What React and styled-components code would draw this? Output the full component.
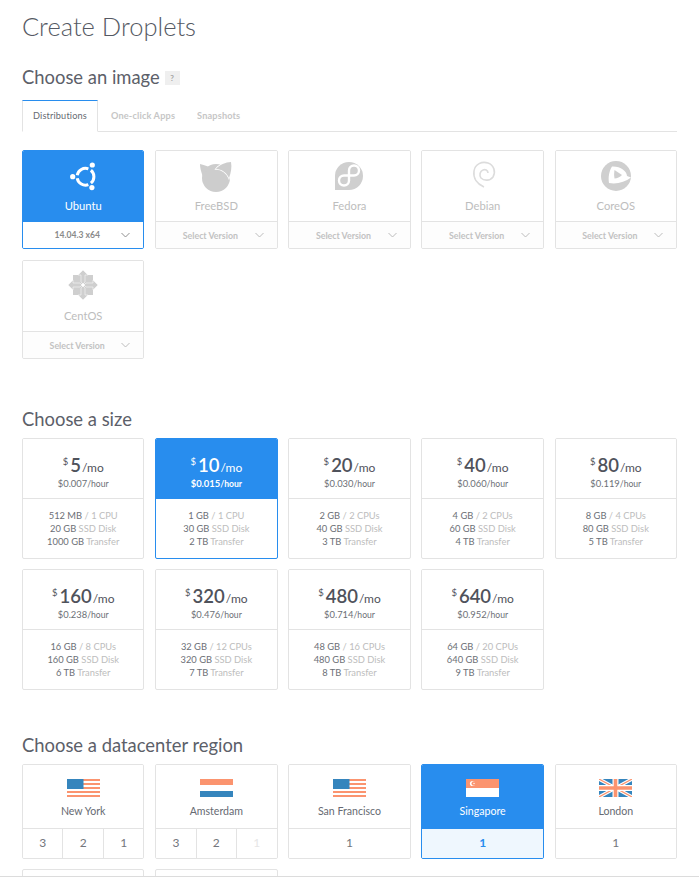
import React from 'react'
import styled, { createGlobalStyle } from 'styled-components'

const BLUE = '#288dee'
const LINE = '#e3e3e3'
const SALMON = '#fb946f'
const FLAG_BLUE = '#3585bd'

const Global = createGlobalStyle`
  html, body {
    margin: 0;
    height: 877px;
    overflow: hidden;
    background: #ffffff;
  }
  body {
    font-family: "Lato", "Liberation Sans", sans-serif;
    color: #5a5d66;
  }
`

const Page = styled.div`
  padding: 0 22px;
`
const Title = styled.h1`
  margin: 0;
  padding-top: 11px;
  font-size: 25.5px;
  line-height: 30px;
  font-weight: 300;
  color: #555963;
`
const Heading = styled.h2`
  display: flex;
  align-items: center;
  gap: 5px;
  margin: ${({ $top }) => $top}px 0 0;
  font-size: 18.4px;
  line-height: 22px;
  font-weight: 400;
  color: #5c6069;
`
const Help = styled.span`
  width: 15px;
  height: 14px;
  margin-top: 2px;
  background: #efefef;
  color: #a5a5a5;
  font-size: 8px;
  font-weight: 700;
  line-height: 14px;
  text-align: center;
`
const Tabs = styled.div`
  display: flex;
  height: 32px;
  margin-top: 12px;
  border-bottom: 1px solid ${LINE};
  box-sizing: border-box;
`
const Tab = styled.div`
  box-sizing: border-box;
  height: 32px;
  padding: 0 10px;
  margin-right: ${({ $active }) => ($active ? 2 : 0)}px;
  border: 1px solid ${({ $active }) => ($active ? LINE : 'transparent')};
  border-top-color: ${({ $active }) => ($active ? BLUE : 'transparent')};
  border-bottom-color: ${({ $active }) => ($active ? '#ffffff' : 'transparent')};
  font-size: 9.2px;
  line-height: 29px;
  font-weight: ${({ $active }) => ($active ? 400 : 700)};
  letter-spacing: 0.15px;
  color: ${({ $active }) => ($active ? '#666a72' : '#c6c6c6')};
`
const Grid = styled.div`
  display: grid;
  grid-template-columns: repeat(5, 1fr);
  column-gap: 10.75px;
  row-gap: ${({ $rowGap }) => $rowGap}px;
  margin-top: ${({ $top }) => $top}px;
`
const Card = styled.div`
  box-sizing: border-box;
  height: ${({ $height }) => $height}px;
  display: flex;
  flex-direction: column;
  border: 1px solid ${({ $active }) => ($active ? BLUE : LINE)};
  border-radius: 2px;
  overflow: hidden;
`
const ImageTop = styled.div`
  height: 70px;
  display: flex;
  flex-direction: column;
  align-items: center;
  padding-top: 7px;
  box-sizing: border-box;
  background: ${({ $active }) => ($active ? BLUE : '#ffffff')};
`
const ImageName = styled.div`
  margin-top: 3px;
  font-size: 11.2px;
  line-height: 18px;
  color: ${({ $active }) => ($active ? '#ffffff' : '#bdbdbd')};
`
const Version = styled.div`
  flex: 1;
  display: flex;
  align-items: center;
  justify-content: center;
  padding-right: 12px;
  position: relative;
  font-size: ${({ $active }) => ($active ? 8.6 : 8.8)}px;
  font-weight: 700;
  color: ${({ $active }) => ($active ? '#8a8a8a' : '#c2c2c2')};
  border-top: 1px solid ${({ $active }) => ($active ? BLUE : LINE)};
  background: ${({ $active }) => ($active ? '#ffffff' : '#fdfdfd')};
`
const Chevron = styled.svg`
  position: absolute;
  right: 13px;
  top: 10px;
  width: 9px;
  height: 6px;
  fill: none;
  stroke: ${({ $active }) => ($active ? '#8f8f8f' : '#bcbcbc')};
  stroke-width: 1;
`
const PriceTop = styled.div`
  height: 60px;
  box-sizing: border-box;
  padding-top: 14px;
  text-align: center;
  color: ${({ $active }) => ($active ? '#ffffff' : '#4f525b')};
  background: ${({ $active }) => ($active ? BLUE : '#ffffff')};
  border-bottom: 1px solid ${({ $active }) => ($active ? BLUE : LINE)};
`
const Monthly = styled.div`
  line-height: 24px;
  height: 24px;
  white-space: nowrap;
`
const Dollar = styled.sup`
  font-size: 9.5px;
  line-height: 0;
  vertical-align: 7px;
  margin-right: 2px;
`
const Amount = styled.span`
  font-size: 18.5px;
  font-weight: 600;
`
const PerMonth = styled.span`
  font-size: 12px;
  margin-left: 1px;
  font-weight: 400;
`
const Hourly = styled.div`
  font-size: 9.4px;
  line-height: 14px;
  font-weight: ${({ $active }) => ($active ? 700 : 400)};
  color: ${({ $active }) => ($active ? '#ffffff' : '#6c6f76')};
`
const HourUnit = styled.span`
  font-size: 8.6px;
`
const Specs = styled.div`
  flex: 1;
  padding-top: 10px;
  text-align: center;
  font-size: 9.35px;
  line-height: 13px;
  color: #6c6f76;
`
const SpecLight = styled.span`
  color: #bdbdbd;
`
const RegionTop = styled.div`
  height: 63px;
  box-sizing: border-box;
  padding-top: 14px;
  display: flex;
  flex-direction: column;
  align-items: center;
  background: ${({ $active }) => ($active ? BLUE : '#ffffff')};
`
const RegionName = styled.div`
  margin-top: 6px;
  font-size: 10.6px;
  line-height: 16px;
  color: ${({ $active }) => ($active ? '#ffffff' : '#666a72')};
`
const Datacenters = styled.div`
  flex: 1;
  display: flex;
  border-top: 1px solid ${({ $active }) => ($active ? BLUE : LINE)};
  background: ${({ $active }) => ($active ? '#eff7fe' : '#ffffff')};
`
const Datacenter = styled.div`
  flex: 1;
  text-align: center;
  font-size: 12px;
  line-height: 28px;
  font-weight: ${({ $active }) => ($active ? 700 : 400)};
  color: ${({ $active, $off }) => ($active ? BLUE : $off ? '#e6e6e6' : '#73767c')};
  & + & {
    border-left: 1px solid ${LINE};
  }
`
const FooterLine = styled.div`
  position: fixed;
  left: 0;
  right: 0;
  bottom: 0;
  height: 1px;
  background: #dcdcdc;
`

const Ubuntu = () => (
  <svg width='36' height='36' viewBox='0 0 36 36'>
    <path d='M23.37 26.59 A8.4 8.4 0 0 1 12.23 20.16 M12.23 17.24 A8.4 8.4 0 0 1 23.37 10.81 M25.9 12.27 A8.4 8.4 0 0 1 25.9 25.13' fill='none' stroke='#fff' strokeWidth='3' />
    <circle cx='7.7' cy='18.7' r='2.6' fill='#fff' />
    <circle cx='27.3' cy='7' r='2.6' fill='#fff' />
    <circle cx='26.9' cy='29.6' r='2.6' fill='#fff' />
  </svg>
)
const FreeBSD = () => (
  <svg width='36' height='36' viewBox='0 0 36 36'>
    <circle cx='18' cy='20' r='14' fill='#cdcdcd' />
    <path d='M2 6 C7 7 11 9 13 10.5 C9 12 6 15 5 18.5 C3 14 2 10 2 6 Z' fill='#cdcdcd' />
    <path d='M33 4 C28 4 21 7 18 11 C24 11 29 15 31 20 C33 15 34 9 33 4 Z' fill='#cdcdcd' stroke='#fff' strokeWidth='1.6' paintOrder='stroke' />
  </svg>
)
const Fedora = () => (
  <svg width='36' height='36' viewBox='0 0 36 36'>
    <path d='M18 4 a14 14 0 1 1 0 28 H4 V18 A14 14 0 0 1 18 4 Z' fill='#cfcfcf' />
    <path d='M18 23 V12.5 a5 5 0 1 1 5 5 H13 a5 5 0 1 0 5 5' fill='none' stroke='#fff' strokeWidth='2.4' />
  </svg>
)
const Debian = () => (
  <svg width='36' height='36' viewBox='0 0 36 36'>
    <path d='M19 29 C12 26 8 20 9 13 C10 6 17 3 23 5 C29 7 31 14 28 19 C25 23 19 23 16 20 C14 17 15 13 18 12 C20 11 23 12 23 15' fill='none' stroke='#dcdcdc' strokeWidth='1.6' />
  </svg>
)
const CoreOS = () => (
  <svg width='36' height='36' viewBox='0 0 36 36'>
    <circle cx='18' cy='18' r='15' fill='#cfcfcf' />
    <path d='M14 8.5 C11 13 10 20 11 25 C19 26.5 27 24 33 19.5 L29 18 C29 13 22 8 14 8.5 Z' fill='#fff' />
    <path d='M16.5 12 L24 17 C22 19 19 20.5 16.5 20.5 C16 18 16 15 16.5 12 Z' fill='#cfcfcf' />
  </svg>
)
const CentOS = () => (
  <svg width='36' height='36' viewBox='0 0 36 36' fill='#cfcfcf'>
    <g transform='translate(0 -1)'>
      <rect x='8' y='8' width='9' height='9' />
      <rect x='19' y='8' width='9' height='9' />
      <rect x='8' y='19' width='9' height='9' />
      <rect x='19' y='19' width='9' height='9' />
      {[0, 90, 180, 270].map(a => (
        <polygon key={a} points='18,3 23,8 20,8 20,15 18,17 16,15 16,8 13,8' transform={`rotate(${a} 18 18)`} stroke='#fff' strokeWidth='0.5' />
      ))}
    </g>
  </svg>
)

const USFlag = () => (
  <svg width='33' height='18' viewBox='0 0 33 18'>
    {[0, 4, 8, 12, 16].map(y => <rect key={y} y={y} width='33' height='2' fill={SALMON} />)}
    <rect width='16.5' height='10' fill={FLAG_BLUE} />
  </svg>
)
const NLFlag = () => (
  <svg width='33' height='18' viewBox='0 0 33 18'>
    <rect width='33' height='6' fill={SALMON} />
    <rect y='12' width='33' height='6' fill={FLAG_BLUE} />
  </svg>
)
const SGFlag = () => (
  <svg width='33' height='18' viewBox='0 0 33 18'>
    <rect width='33' height='9' fill={SALMON} />
    <rect y='9' width='33' height='9' fill='#fff' />
    <circle cx='6.5' cy='4.5' r='2.6' fill='#fff' />
    <circle cx='7.7' cy='4.5' r='2.2' fill={SALMON} />
    <circle cx='8' cy='4.5' r='0.7' fill='#fff' />
  </svg>
)
const UKFlag = () => (
  <svg width='33' height='18' viewBox='0 0 33 18'>
    <rect width='33' height='18' fill={FLAG_BLUE} />
    <path d='M0 0 L33 18 M33 0 L0 18' stroke='#fff' strokeWidth='3.4' />
    <path d='M0 0 L33 18 M33 0 L0 18' stroke={SALMON} strokeWidth='1.2' />
    <path d='M16.5 0 V18 M0 9 H33' stroke='#fff' strokeWidth='6' />
    <path d='M16.5 0 V18 M0 9 H33' stroke={SALMON} strokeWidth='3.6' />
  </svg>
)

const images = [
  { name: 'Ubuntu', Icon: Ubuntu, version: '14.04.3 x64', active: true },
  { name: 'FreeBSD', Icon: FreeBSD },
  { name: 'Fedora', Icon: Fedora },
  { name: 'Debian', Icon: Debian },
  { name: 'CoreOS', Icon: CoreOS },
  { name: 'CentOS', Icon: CentOS },
]

const sizes = [
  { price: 5, hour: '0.007', mem: '512 MB', cpu: '1 CPU', disk: 20, transfer: '1000 GB' },
  { price: 10, hour: '0.015', mem: '1 GB', cpu: '1 CPU', disk: 30, transfer: '2 TB', active: true },
  { price: 20, hour: '0.030', mem: '2 GB', cpu: '2 CPUs', disk: 40, transfer: '3 TB' },
  { price: 40, hour: '0.060', mem: '4 GB', cpu: '2 CPUs', disk: 60, transfer: '4 TB' },
  { price: 80, hour: '0.119', mem: '8 GB', cpu: '4 CPUs', disk: 80, transfer: '5 TB' },
  { price: 160, hour: '0.238', mem: '16 GB', cpu: '8 CPUs', disk: 160, transfer: '6 TB' },
  { price: 320, hour: '0.476', mem: '32 GB', cpu: '12 CPUs', disk: 320, transfer: '7 TB' },
  { price: 480, hour: '0.714', mem: '48 GB', cpu: '16 CPUs', disk: 480, transfer: '8 TB' },
  { price: 640, hour: '0.952', mem: '64 GB', cpu: '20 CPUs', disk: 640, transfer: '9 TB' },
]

const regions = [
  { name: 'New York', Flag: USFlag, centers: [3, 2, 1] },
  { name: 'Amsterdam', Flag: NLFlag, centers: [3, 2, 1], off: [1] },
  { name: 'San Francisco', Flag: USFlag, centers: [1] },
  { name: 'Singapore', Flag: SGFlag, centers: [1], active: true },
  { name: 'London', Flag: UKFlag, centers: [1] },
]

const App = () => (
  <Page>
    <Global />
    <Title>Create Droplets</Title>

    <Heading $top={25}>Choose an image <Help>?</Help></Heading>
    <Tabs>
      <Tab $active>Distributions</Tab>
      <Tab>One-click Apps</Tab>
      <Tab>Snapshots</Tab>
    </Tabs>
    <Grid $top={18} $rowGap={11}>
      {images.map(({ name, Icon, version, active }) => (
        <Card key={name} $height={99} $active={active}>
          <ImageTop $active={active}>
            <Icon />
            <ImageName $active={active}>{name}</ImageName>
          </ImageTop>
          <Version $active={active}>
            {version || 'Select Version'}
            <Chevron $active={active} viewBox='0 0 9 6'><polyline points='0.5,1 4.5,5 8.5,1' /></Chevron>
          </Version>
        </Card>
      ))}
    </Grid>

    <Heading $top={49}>Choose a size</Heading>
    <Grid $top={8} $rowGap={10}>
      {sizes.map(s => (
        <Card key={s.price} $height={121} $active={s.active}>
          <PriceTop $active={s.active}>
            <Monthly>
              <Dollar>$</Dollar>
              <Amount>{s.price}</Amount>
              <PerMonth>/mo</PerMonth>
            </Monthly>
            <Hourly $active={s.active}>${s.hour}<HourUnit>/hour</HourUnit></Hourly>
          </PriceTop>
          <Specs>
            <div>{s.mem} <SpecLight>/ {s.cpu}</SpecLight></div>
            <div>{s.disk} GB <SpecLight>SSD Disk</SpecLight></div>
            <div>{s.transfer} <SpecLight>Transfer</SpecLight></div>
          </Specs>
        </Card>
      ))}
    </Grid>

    <Heading $top={44}>Choose a datacenter region</Heading>
    <Grid $top={8} $rowGap={10}>
      {regions.map(({ name, Flag, centers, off = [], active }) => (
        <Card key={name} $height={95} $active={active}>
          <RegionTop $active={active}>
            <Flag />
            <RegionName $active={active}>{name}</RegionName>
          </RegionTop>
          <Datacenters $active={active}>
            {centers.map(c => (
              <Datacenter key={c} $active={active} $off={off.includes(c)}>{c}</Datacenter>
            ))}
          </Datacenters>
        </Card>
      ))}
      <Card $height={95} />
      <Card $height={95} />
    </Grid>
    <FooterLine />
  </Page>
)

export default App
